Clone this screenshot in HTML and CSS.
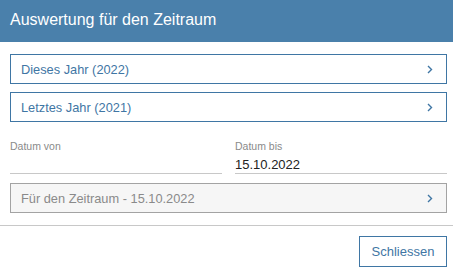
FILE: index.html
```html
<!DOCTYPE html>
<html lang="de">

<head>
  <meta charset="UTF-8">
  <meta name="viewport" content="width=device-width, initial-scale=1.0">
  <title>Auswertung für den Zeitraum</title>
  <link rel="stylesheet" href="styles.css">
</head>

<body>
  <main class="dialog">
    <header class="dialog-header">Auswertung für den Zeitraum</header>

    <div class="dialog-body">
      <div class="options">
        <button class="option">
          <span>Dieses Jahr (2022)</span>
          <svg class="chevron" viewBox="0 0 6 9"><path d="M1 1l3.5 3.5L1 8" /></svg>
        </button>
        <button class="option">
          <span>Letztes Jahr (2021)</span>
          <svg class="chevron" viewBox="0 0 6 9"><path d="M1 1l3.5 3.5L1 8" /></svg>
        </button>
      </div>

      <div class="dates">
        <label class="field">
          <span class="field-label">Datum von</span>
          <input class="field-input" type="text" value="">
        </label>
        <label class="field">
          <span class="field-label">Datum bis</span>
          <input class="field-input" type="text" value="15.10.2022">
        </label>
      </div>

      <button class="option option-range">
        <span>Für den Zeitraum - 15.10.2022</span>
        <svg class="chevron" viewBox="0 0 6 9"><path d="M1 1l3.5 3.5L1 8" /></svg>
      </button>
    </div>

    <footer class="dialog-footer">
      <button class="close-button">Schliessen</button>
    </footer>
  </main>
</body>

</html>
```

FILE: styles.css
```css
*,
*::before,
*::after {
  box-sizing: border-box;
}

body {
  font-family: 'Liberation Sans', Arial, sans-serif;
  background: #fff;
  color: #333;
  margin: 0;
}

.dialog {
  display: flex;
  flex-direction: column;
  width: 453px;
}

.dialog-header {
  background: #4a80ab;
  color: #fff;
  font-size: 16px;
  height: 42px;
  display: flex;
  align-items: center;
  padding: 0 10px 2px;
}

.dialog-body {
  display: flex;
  flex-direction: column;
  padding: 12px 6px 12px 10px;
  border-bottom: 1px solid #c8c8c8;
}

.options {
  display: flex;
  flex-direction: column;
  gap: 8px;
}

.option {
  display: flex;
  justify-content: space-between;
  align-items: center;
  height: 30px;
  width: 100%;
  padding: 0 13px 0 10px;
  background: #fff;
  border: 1px solid #3f76a4;
  color: #3f76a4;
  font-family: inherit;
  font-size: 12.8px;
  cursor: pointer;
  text-align: left;
}

.chevron {
  width: 6px;
  height: 9px;

  path {
    fill: none;
    stroke: #3f76a4;
    stroke-width: 1.4;
  }
}

.option-range {
  background: #f6f6f6;
  border-color: #a3a3a3;
  color: #8a8a8a;
}

.dates {
  display: grid;
  grid-template-columns: 1fr 1fr;
  gap: 13px;
  margin: 18px 0 9px;
}

.field {
  display: flex;
  flex-direction: column;
}

.field-label {
  font-size: 10.5px;
  line-height: 13px;
  color: #8a8a8a;
}

.field-input {
  border: 0;
  border-bottom: 1px solid #c8c8c8;
  font-family: inherit;
  font-size: 13px;
  color: #222;
  padding: 4px 0 1px;
  height: 21px;
  outline: none;
  background: transparent;
}

.dialog-footer {
  display: flex;
  justify-content: flex-end;
  padding: 10px 6px 0;
}

.close-button {
  height: 31px;
  width: 88px;
  padding: 0;
  background: #fff;
  border: 1px solid #3f76a4;
  color: #3f76a4;
  font-family: inherit;
  font-size: 13px;
  cursor: pointer;
}
```
